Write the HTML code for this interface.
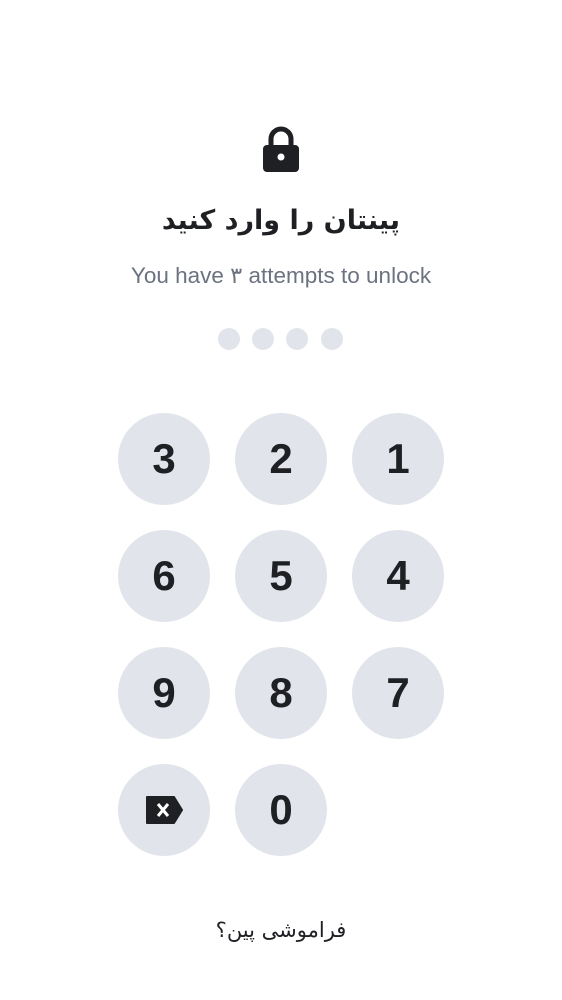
<!DOCTYPE html>
<html><head><meta charset="utf-8"><style>
html,body{margin:0;padding:0;background:#fff;width:562px;height:1000px;overflow:hidden;position:relative;font-family:"Liberation Sans","Noto Sans CJK SC",sans-serif}
.a{position:absolute}
.k{position:absolute;width:92px;height:92px;border-radius:50%;background:#e1e5eb;display:flex;align-items:center;justify-content:center;font-weight:bold;font-size:42px;color:#1f2024}
.d{position:absolute;top:328px;width:22px;height:22px;border-radius:50%;background:#e1e5eb}
</style></head><body>
<svg class="a" style="left:262px;top:126px" width="38" height="46" viewBox="0 0 38 46">
<path d="M9 20V13a10 10 0 0 1 20 0v7" fill="none" stroke="#1f2024" stroke-width="5"/>
<rect x="1" y="19" width="36" height="27" rx="4" fill="#1f2024"/>
<circle cx="19" cy="31" r="3.5" fill="#fff"/>
</svg>
<div class="a" style="left:0;width:562px;top:205px;text-align:center;font-size:27px;font-weight:bold;color:#1f2024;font-family:'DejaVu Sans',sans-serif" dir="rtl">پینتان را وارد کنید</div>
<div class="a" style="left:0;width:562px;top:263px;text-align:center;font-size:22.5px;color:#6b7280">You have ۳ attempts to unlock</div>
<div class="d" style="left:218px"></div><div class="d" style="left:252px"></div><div class="d" style="left:286px"></div><div class="d" style="left:321px"></div>
<div class="k" style="left:118px;top:413px">3</div><div class="k" style="left:235px;top:413px">2</div><div class="k" style="left:352px;top:413px">1</div>
<div class="k" style="left:118px;top:530px">6</div><div class="k" style="left:235px;top:530px">5</div><div class="k" style="left:352px;top:530px">4</div>
<div class="k" style="left:118px;top:647px">9</div><div class="k" style="left:235px;top:647px">8</div><div class="k" style="left:352px;top:647px">7</div>
<div class="k" style="left:118px;top:764px"><svg width="38" height="28" viewBox="0 0 38 28"><path d="M2 1H29L37 14L29 27H2Z" fill="#1f2024" stroke="#1f2024" stroke-linejoin="round" stroke-width="2"/><path d="M13 8l10 12M23 8L13 20" stroke="#fff" stroke-width="3"/></svg></div>
<div class="k" style="left:235px;top:764px">0</div>
<div class="a" style="left:0;width:562px;top:918px;text-align:center;font-size:21px;color:#1f2024;font-family:'DejaVu Sans',sans-serif" dir="rtl">فراموشی پین؟</div>
</body></html>
